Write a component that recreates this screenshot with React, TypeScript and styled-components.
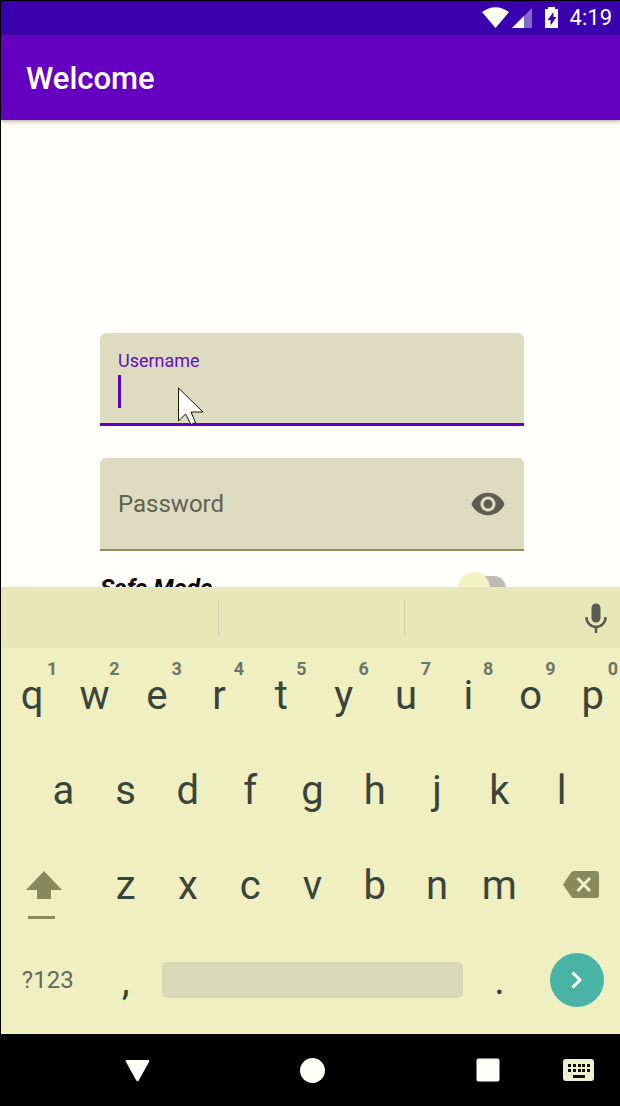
import React from "react";
import styled, { createGlobalStyle } from "styled-components";

const GlobalStyle = createGlobalStyle`
  * { box-sizing: border-box; }
  html, body { margin: 0; background: #000000; }
  body { font-family: Roboto, "Noto Sans", sans-serif; }
  button, input { font-family: inherit; }
  svg { display: block; }
`;

const Screen = styled.div`
  display: flex;
  flex-direction: column;
  height: 100vh;
  min-height: 800px;
  border-top: 1px solid #000000;
  border-left: 1px solid #000000;
  overflow: hidden;
`;

const StatusBar = styled.div`
  display: flex;
  flex: none;
  align-items: center;
  justify-content: flex-end;
  height: 34px;
  padding-right: 8px;
  background: #3a00ae;
  color: #ffffff;
`;

const Clock = styled.time`
  margin-left: 10px;
  font-size: 22px;
  line-height: 26px;
`;

const AppBar = styled.header`
  position: relative;
  z-index: 1;
  display: flex;
  flex: none;
  align-items: center;
  height: 85px;
  padding: 3px 25px 0;
  background: #6600c0;
  box-shadow: 0 1px 4px rgba(70, 70, 20, 0.5);
`;

const Title = styled.h1`
  margin: 0;
  color: #ffffff;
  font-size: 31px;
  font-weight: 500;
  line-height: 40px;
`;

const Content = styled.main`
  flex: 1 1 0;
  min-height: 0;
  overflow: hidden;
  padding: 213px 96px 0 99px;
  background: #fefefa;
`;

const Form = styled.form`
  display: flex;
  flex-direction: column;
  gap: 32px;
`;

const Field = styled.div<{ $active?: boolean }>`
  position: relative;
  display: flex;
  flex-direction: ${(p) => (p.$active ? "column" : "row")};
  align-items: ${(p) => (p.$active ? "stretch" : "center")};
  height: 93px;
  padding: ${(p) => (p.$active ? "18px 18px 0" : "0 18px")};
  border-radius: 6px 6px 0 0;
  border-bottom: ${(p) => (p.$active ? "3px solid #6200c4" : "2px solid #8c8c60")};
  background: #dddcc0;
`;

const FloatingLabel = styled.label`
  color: #6410c0;
  font-size: 18px;
  line-height: 20px;
`;

const EntryLine = styled.div`
  display: flex;
  align-items: center;
  height: 34px;
  margin-top: 3px;
`;

const Caret = styled.span`
  flex: none;
  width: 3px;
  height: 33px;
  background: #6200c4;
`;

const TextInput = styled.input`
  flex: 1;
  min-width: 0;
  padding: 0;
  border: 0;
  outline: 0;
  background: transparent;
  color: #4c4c40;
  font-size: 24px;
  line-height: 32px;
  &::placeholder { color: #626250; opacity: 1; }
`;

const IconButton = styled.button`
  display: flex;
  flex: none;
  align-items: center;
  justify-content: center;
  padding: 0;
  border: 0;
  background: transparent;
  color: #5c5c50;
`;

const Pointer = styled.svg`
  position: absolute;
  left: 78px;
  top: 54px;
`;

const SwitchRow = styled.label`
  display: flex;
  justify-content: space-between;
  align-items: center;
  height: 38px;
  margin-top: -14px;
  padding-right: 18px;
  color: #080808;
  font-size: 24px;
  font-style: italic;
  font-weight: 700;
`;

const Switch = styled.input`
  position: relative;
  appearance: none;
  width: 44px;
  height: 24px;
  margin: 0;
  border-radius: 12px;
  background: #bcbcb4;
  &::before {
    content: "";
    position: absolute;
    left: -4px;
    top: -4px;
    width: 32px;
    height: 32px;
    border-radius: 50%;
    background: #f2f2c4;
  }
`;

const Keyboard = styled.section`
  flex: none;
  padding-bottom: 6px;
  overflow: hidden;
  background: #efefc2;
`;

const Suggestions = styled.div`
  display: grid;
  grid-template-columns: 218px 1fr 1fr;
  align-items: center;
  height: 61px;
  margin-right: 30px;
  background: #e7e8b9;
  box-shadow: 30px 0 0 #e7e8b9;
`;

const Suggestion = styled.div<{ $divider?: boolean }>`
  display: flex;
  justify-content: flex-end;
  height: 36px;
  border-right: ${(p) => (p.$divider ? "1px solid #cfcfae" : "0")};
`;

const MicButton = styled(IconButton)`
  margin-right: -18px;
  color: #585c50;
`;

const KeyRow = styled.div`
  display: grid;
  grid-template-columns: repeat(20, 1fr);
  height: 95px;
  margin-right: -4px;
`;

const Key = styled.button<{ $span?: number; $start?: number; $small?: boolean }>`
  position: relative;
  grid-column: ${(p) => (p.$start ? `${p.$start} / ` : "")}span ${(p) => p.$span ?? 2};
  display: flex;
  align-items: center;
  justify-content: center;
  min-width: 0;
  padding: 0;
  border: 0;
  background: transparent;
  color: ${(p) => (p.$small ? "#65695a" : "#3b443a")};
  font-size: ${(p) => (p.$small ? 24 : 40)}px;
  line-height: 48px;
`;

const Hint = styled.span`
  position: absolute;
  top: 11px;
  right: 6px;
  color: #717566;
  font-size: 18px;
  font-weight: 700;
  line-height: 20px;
`;

const ShiftKey = styled(Key)`
  padding: 18px 7px 0 0;
  color: #87895e;
`;

const DeleteKey = styled(Key)`
  padding: 0 0 2px 8px;
  color: #87895e;
`;

const BottomKey = styled(Key)`
  padding-bottom: 2px;
`;

const SpaceBar = styled.span`
  flex: 1;
  height: 36px;
  margin: 0 5px;
  border-radius: 5px;
  background: #d8d9b5;
`;

const EnterDisc = styled.span`
  display: flex;
  align-items: center;
  justify-content: center;
  width: 54px;
  height: 54px;
  border-radius: 50%;
  background: #49b4a6;
`;

const NavBar = styled.nav`
  display: grid;
  flex: none;
  grid-template-columns: 49px 1fr 1fr 1fr 44px;
  align-items: center;
  height: 72px;
  background: #000000;
`;

const NavButton = styled(IconButton)<{ $first?: boolean }>`
  grid-column: ${(p) => (p.$first ? 2 : "auto")};
  color: #fffff8;
`;

const ImeButton = styled(IconButton)`
  justify-self: end;
  margin-right: 26px;
  color: #efefd4;
`;

const StatusIcons = () => (
  <svg width="78" height="24" viewBox="0 0 78 24" fill="#fffff4" aria-hidden="true">
    <path d="M0 6Q13.500 -3.500 27 6L13.500 22Z" />
    <path d="M30 22L50 2V22Z" fill="#8668cc" />
    <path d="M30 22L42 10V22Z" />
    <path fillRule="evenodd" d="M66 1h7v2h3v19H63V3h3zM71.500 6l-6 8h3V19.500l6-8.500h-3z" />
  </svg>
);

const firstRow = [..."qwertyuiop"];
const secondRow = [..."asdfghjkl"];
const thirdRow = [..."zxcvbnm"];

export default function App() {
  return (
    <>
      <GlobalStyle />
      <Screen>
        <StatusBar>
          <StatusIcons />
          <Clock>4:19</Clock>
        </StatusBar>
        <AppBar>
          <Title>Welcome</Title>
        </AppBar>
        <Content>
          <Form>
            <Field $active>
              <FloatingLabel htmlFor="username">Username</FloatingLabel>
              <EntryLine>
                <Caret />
                <TextInput id="username" type="text" />
              </EntryLine>
              <Pointer width="27" height="39" viewBox="0 0 27 39" aria-hidden="true">
                <path d="M.5 1V34L7.500 27L13 37.500L17.500 35.500L13 25H25Z" fill="#fffffa" stroke="#15150c" />
              </Pointer>
            </Field>
            <Field>
              <TextInput type="password" placeholder="Password" aria-label="Password" />
              <IconButton type="button" aria-label="Show password">
                <svg width="36" height="36" viewBox="0 0 24 24" fill="currentColor">
                  <path d="M12 4.500C7 4.500 2.730 7.610 1 12c1.730 4.390 6 7.500 11 7.500s9.270-3.110 11-7.500c-1.730-4.390-6-7.500-11-7.500zM12 17c-2.760 0-5-2.240-5-5s2.240-5 5-5 5 2.240 5 5-2.240 5-5 5zm0-8c-1.660 0-3 1.340-3 3s1.340 3 3 3 3-1.340 3-3-1.340-3-3-3z" />
                </svg>
              </IconButton>
            </Field>
            <SwitchRow>
              Safe Mode
              <Switch type="checkbox" role="switch" />
            </SwitchRow>
          </Form>
        </Content>
        <Keyboard aria-label="Keyboard">
          <Suggestions>
            <Suggestion $divider />
            <Suggestion $divider />
            <Suggestion>
              <MicButton type="button" aria-label="Voice input">
                <svg width="24" height="30" viewBox="0 0 24 30" fill="none" stroke="currentColor">
                  <rect x="7.500" y="0.500" width="9" height="19" rx="4.500" fill="currentColor" stroke="none" />
                  <path d="M2.500 14v.5a9.500 9.500 0 0 0 19 0V14M12 24v6" strokeWidth="2.500" />
                </svg>
              </MicButton>
            </Suggestion>
          </Suggestions>
          <KeyRow>
            {firstRow.map((letter, i) => (
              <Key key={letter} type="button">
                {letter}
                <Hint>{(i + 1) % 10}</Hint>
              </Key>
            ))}
          </KeyRow>
          <KeyRow>
            {secondRow.map((letter, i) => (
              <Key key={letter} type="button" $start={i === 0 ? 2 : undefined}>{letter}</Key>
            ))}
          </KeyRow>
          <KeyRow>
            <ShiftKey type="button" $span={3} aria-label="Shift">
              <svg width="36" height="48" viewBox="0 0 36 48" fill="currentColor">
                <path d="M18 0L36 19H25V28H11V19H0ZM2 45h27v3H2z" />
              </svg>
            </ShiftKey>
            {thirdRow.map((letter) => (
              <Key key={letter} type="button">{letter}</Key>
            ))}
            <DeleteKey type="button" $span={3} aria-label="Backspace">
              <svg width="36" height="27" viewBox="0 0 36 27">
                <path d="M11 0H33Q36 0 36 3V24Q36 27 33 27H11Q9 27 8 25.500L0 13.500L8 1.500Q9 0 11 0Z" fill="currentColor" />
                <path d="M14.500 7L27 20M27 7L14.500 20" stroke="#f4f4cc" strokeWidth="3" />
              </svg>
            </DeleteKey>
          </KeyRow>
          <KeyRow>
            <BottomKey type="button" $span={3} $small>?123</BottomKey>
            <Key type="button">,</Key>
            <BottomKey type="button" $span={10} aria-label="Space"><SpaceBar /></BottomKey>
            <Key type="button">.</Key>
            <BottomKey type="button" $span={3} aria-label="Next">
              <EnterDisc>
                <svg width="12" height="18" viewBox="0 0 12 18" fill="none" stroke="#fffff4" strokeWidth="3">
                  <path d="M1.500 1.500L9 9L1.500 16.500" />
                </svg>
              </EnterDisc>
            </BottomKey>
          </KeyRow>
        </Keyboard>
        <NavBar>
          <NavButton type="button" $first aria-label="Back">
            <svg width="25" height="23" viewBox="0 0 25 23" fill="currentColor">
              <path d="M2 1H23Q25 1 24 3L14 21Q12.500 23.500 11 21L1 3Q0 1 2 1Z" />
            </svg>
          </NavButton>
          <NavButton type="button" aria-label="Home">
            <svg width="25" height="25" viewBox="0 0 25 25" fill="currentColor">
              <circle cx="12.500" cy="12.500" r="12.500" />
            </svg>
          </NavButton>
          <NavButton type="button" aria-label="Recent apps">
            <svg width="24" height="24" viewBox="0 0 24 24" fill="currentColor">
              <rect x="0.500" y="0.500" width="23" height="23" rx="2" />
            </svg>
          </NavButton>
          <ImeButton type="button" aria-label="Choose keyboard">
            <svg width="31" height="22" viewBox="0 0 31 22">
              <rect width="31" height="22" rx="3" fill="currentColor" />
              <g fill="#101008">
                {[5, 10, 15, 19, 24].map((x) => (
                  <React.Fragment key={x}>
                    <rect x={x} y="5" width="3" height="3" />
                    <rect x={x} y="10" width="3" height="3" />
                  </React.Fragment>
                ))}
                <rect x="10" y="16" width="12" height="3" />
              </g>
            </svg>
          </ImeButton>
        </NavBar>
      </Screen>
    </>
  );
}
